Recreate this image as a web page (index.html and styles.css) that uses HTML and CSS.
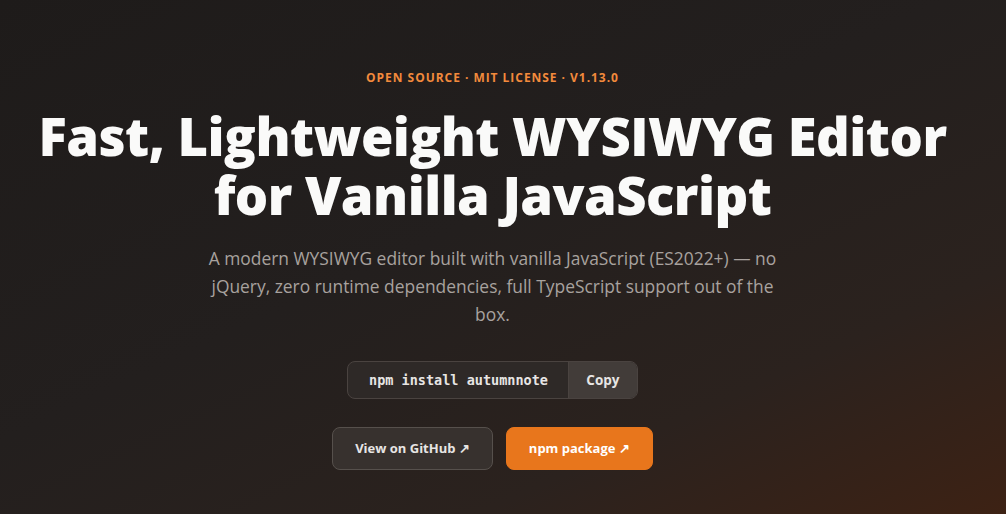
FILE: index.html
```html
<!DOCTYPE html>
<html>
    <head>
        <meta name="viewport" content="width=device-width, initial-scale=1.0">
        <meta charset="utf-8">
        <title>AutumnNote | Fast, Lightweight WYSIWYG Editor</title>
        <link rel="stylesheet" href="styles.css">
    </head>
    <body>
        <main class="hero">
            <p class="eyebrow">Open Source · MIT License · v1.13.0</p>
            <h1 class="hero-title">Fast, Lightweight WYSIWYG Editor for Vanilla JavaScript</h1>
            <p class="hero-lead">A modern WYSIWYG editor built with vanilla JavaScript (ES2022+) — no jQuery, zero runtime dependencies, full TypeScript support out of the box.</p>
            <div class="install">
                <code class="install-cmd">npm install autumnnote</code>
                <button class="install-copy">Copy</button>
            </div>
            <div class="actions">
                <a class="btn btn-ghost" href="#">View on GitHub ↗</a>
                <a class="btn btn-primary" href="#">npm package ↗</a>
            </div>
        </main>
    </body>
</html>
```

FILE: styles.css
```css
html, body {
    height: 100%;
}

body {
    margin: 0;
    background: linear-gradient(155deg, #1e1b1a 0%, #231f1e 45%, #2b221e 75%, #3d2214 100%);
    color: #fafaf9;
    font-family: "Open Sans", "Noto Sans", sans-serif;
}

.hero {
    display: flex;
    flex-direction: column;
    align-items: center;
    text-align: center;
    padding: 69px 21px 0 0;
}

.eyebrow {
    margin: 0;
    color: #f28a3c;
    font-size: 12px;
    font-weight: 700;
    letter-spacing: 0.08em;
    text-transform: uppercase;
}

.hero-title {
    margin: 20px 0 0;
    width: 960px;
    font-size: 52.5px;
    font-weight: 800;
    line-height: 59px;
    letter-spacing: -0.01em;
}

.hero-lead {
    margin: 20px 0 0;
    width: 578px;
    color: #a8a29e;
    font-size: 17.4px;
    line-height: 28px;
}

.install {
    display: flex;
    margin-top: 33px;
    border: 1px solid #4a4340;
    border-radius: 8px;
    background: #2e2927;
    overflow: hidden;
}

.install-cmd {
    padding: 0 20px 0 21px;
    line-height: 36px;
    color: #e7e5e4;
    font-family: "DejaVu Sans Mono", "Liberation Mono", monospace;
    font-size: 13.5px;
    font-weight: 700;
}

.install-copy {
    width: 69px;
    border: none;
    border-left: 1px solid #4a4340;
    background: #423c39;
    color: #e7e5e4;
    font-family: inherit;
    font-size: 13.5px;
    font-weight: 700;
}

.actions {
    display: flex;
    gap: 13px;
    margin-top: 28px;
}

.btn {
    display: block;
    padding: 0 22px;
    line-height: 41px;
    border: 1px solid transparent;
    border-radius: 8px;
    font-size: 13px;
    font-weight: 700;
    text-decoration: none;
}

.btn-ghost {
    background: #37312e;
    border-color: #56504c;
    color: #e7e5e4;
}

.btn-primary {
    background: #e8761c;
    border-color: #e8761c;
    color: #fff;
}
```
